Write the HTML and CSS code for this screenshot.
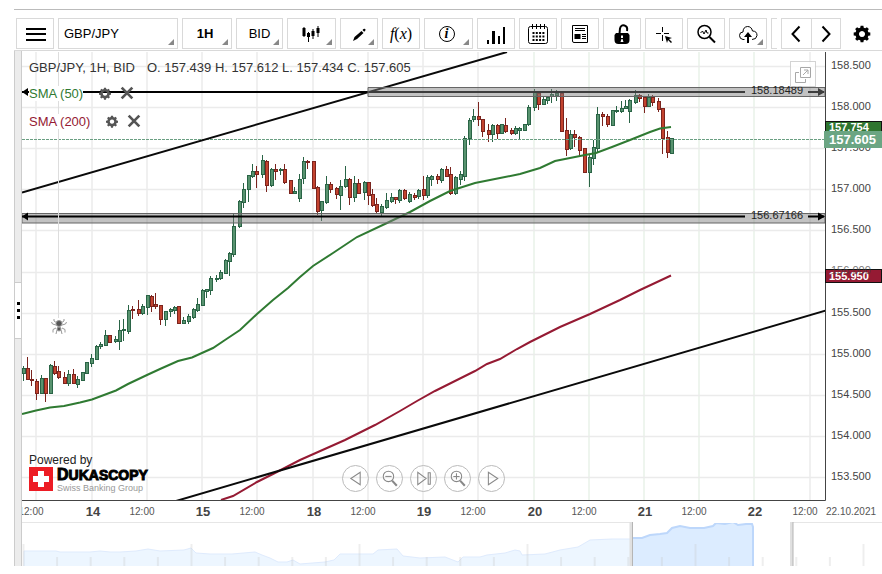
FILE: index.html
```html
<!DOCTYPE html>
<html lang="en">
<head>
<meta charset="utf-8">
<title>GBP/JPY, 1H</title>
<link rel="stylesheet" href="styles.css">
</head>
<body>
<main class="widget">
  <nav class="toolbar" aria-label="Chart tools">
    <button class="tool" aria-label="Menu"><svg viewBox="0 0 24 24"><path class="s2" d="M3 7H23M3 12H23M3 18H23"/></svg></button>
    <button class="tool symbol more">GBP/JPY</button>
    <button class="tool period more">1H</button>
    <button class="tool side more">BID</button>
    <button class="tool wide more" aria-label="Chart type"><svg viewBox="0 0 24 24"><path class="s1" d="M4 5V15M8.500 10V20M13 7V17M18 4V15"/><path d="M2.500 6h3v8h-3zM7 11h3v4H7zM11.500 9h3v5h-3zM16.500 6h3v5h-3z"/></svg></button>
    <button class="tool more" aria-label="Draw"><svg viewBox="0 0 24 24"><path d="M6 19l1.500-4 7-6 2 2-6.500 6zM15.500 8l1-1q1-.7 1.700 0t0 1.700l-1 1z"/></svg></button>
    <button class="tool fx"><i>f</i>(<i>x</i>)</button>
    <button class="tool wide more info" aria-label="Information"><span class="ring">i</span></button>
    <button class="tool" aria-label="Volume"><svg viewBox="0 0 24 24"><path d="M3 18h2v4H3zM8 9h3v13H8zM14 14h2v8h-2zM19 5h2v17h-2z"/></svg></button>
    <button class="tool" aria-label="Calendar"><svg viewBox="0 0 24 24"><rect class="s1" x="2.500" y="4.500" width="19" height="17" rx="2"/><path class="s1" d="M6.500 2v5M10.500 2v5M14.500 2v5M18.500 2v5"/><path class="dots" d="M6.500 11h12M6.500 14.500h12M6.500 18h12"/></svg></button>
    <button class="tool" aria-label="News"><svg viewBox="0 0 24 24"><path class="s1" d="M4.500 3.500H19.500V20.500H6Q4.500 20.500 4.500 19zM7 6.500h10M7 8.500h10M14 12.500h4M14 14.500h4M14 16.500h4"/><path d="M6.500 12h6v5h-6z"/></svg></button>
    <button class="tool" aria-label="Lock"><svg viewBox="0 0 24 24"><path class="s2" d="M9.500 12L10 6.500Q11 2.500 14.500 3.500T17 9"/><path fill-rule="evenodd" d="M6 11H18L19.500 13V18Q19.500 22 15.500 22H8.500Q4.500 22 4.500 18V13zM11 13.500v2.500h2v-2.500zm.5 3.500-1 3h3l-1-3z"/></svg></button>
    <button class="tool" aria-label="Crosshair"><svg viewBox="0 0 24 24"><path class="s1" d="M10.500 5v5M10.500 13v6M4 11.500h5M12 11.500h5"/><path d="M13 14l7 2-3 1 3 3-1 1-3-3-1 3z"/></svg></button>
    <button class="tool" aria-label="Zoom"><svg viewBox="0 0 24 24"><circle class="s15" cx="10.500" cy="10" r="6.500"/><path class="s1" d="M6.500 11l2-2 1.500 3 2-4 1 3h1.500"/><path class="s2" d="M15.500 15l5.500 5.500"/></svg></button>
    <button class="tool more" aria-label="Save"><svg viewBox="0 0 24 24"><path class="s1" d="M8.500 17.500H7Q3.500 17 3.500 13.500T7 10Q7 5 11.500 4.500 15.500 4.500 16.500 9 21 9 21 13.500 20.500 17.500 16 17.500"/><path d="M12 10l4 5h-3v6h-2v-6H8z"/></svg></button>
    <span class="clip"></span>
    <span class="pager">
      <button aria-label="Previous"><svg viewBox="0 0 24 24"><path class="s2" d="M15.500 4.500L8.500 12l7 7.500"/></svg></button>
      <button aria-label="Next"><svg viewBox="0 0 24 24"><path class="s2" d="M8.500 4.500L15.500 12l-7 7.500"/></svg></button>
    </span>
    <button class="settings" aria-label="Settings"><svg viewBox="-1 0 26 26"><use href="#gear"/></svg></button>
  </nav>

  <div class="workspace">
    <aside class="splitter"><button class="grip" aria-label="Resize panel"><i></i><i></i><i></i></button></aside>
    <section class="chart">
      <svg class="plot" viewBox="22 51 860 515" role="img" aria-label="GBP/JPY hourly candles">
        <defs>
          <path id="gear" fill-rule="evenodd" d="M10.500 4h3l.4 2.100 1.600.7 1.800-1.200 2.100 2.100-1.200 1.800.7 1.600 2.100.4v3l-2.100.4-.7 1.600 1.200 1.800-2.100 2.100-1.800-1.200-1.600.7-.4 2.100h-3l-.4-2.100-1.600-.7-1.800 1.200-2.100-2.100 1.200-1.800-.7-1.600L3 14.500v-3l2.100-.4.700-1.600-1.200-1.800 2.100-2.100 1.800 1.200 1.600-.7zM12 9.700a3.300 3.300 0 1 0 .01 0z"/>
          <clipPath id="area"><rect x="22" y="52" width="803" height="448"/></clipPath>
          <clipPath id="times"><rect x="22" y="501" width="860" height="20"/></clipPath>
          <clipPath id="window"><rect x="633" y="523" width="158" height="43"/></clipPath>
        </defs>
        <g id="grid" clip-path="url(#area)"></g>
        <g id="candles" class="candles"></g>
        <g clip-path="url(#area)">
          <path class="dash" d="M22 139.500H825"/>
          <polyline class="sma50" points="22,414 36,410.500 50,407.500 64,406 80,402.500 92,399.500 104,395 116,390.500 128,384 147,375 160,369 178,361 192,357.500 213,348 225,340 240,330 257,314 273,300 288,288 300,277 313,266 333,253 357,237 387,223 410,212 430,201 450,191 475,183 500,178 520,174 540,168 555,161 570,158 585,155 596,153 612,147 630,140 650,132 660,128.500 671,127"/>
          <polyline class="sma200" points="221,500 233,496 257,482 273,474 300,460 318,452 345,440 375,425 400,411 417,401 435,391 455,381 475,371 487,364 500,359 517,349 530,342 560,327 590,314 620,300 640,290 655,283 671,275.500"/>
          <path class="trend" d="M22 192.500L507 52M176 501L826 310.500"/>
          <path class="level" d="M22 92H745M808 92H824"/>
          <path class="head" d="M22 92l6-4v8zM825 92l-7-4v8z"/>
          <path class="zone" d="M368 87.500H825V96.500H368zM22 213.500H825V223H22z"/>
          <path class="level" d="M22 216.500H745M808 216.500H824"/>
          <path class="head" d="M22 216.500l6-4v8zM825 216.500l-7-4v8z"/>
          <path class="cursor" d="M58.500 52V318"/>
        </g>
        <g class="levels"><text x="751" y="94">158.18489</text><text x="751" y="219">156.67166</text></g>
        <path class="axis" d="M22 500.500H825.500V52"/>
        <g id="prices" class="prices"></g>
        <rect class="tag tag-red" x="825.500" y="269.500" width="56" height="13"/><text class="tag-text" x="829" y="280">155.950</text>
        <g class="prices"><text class="through" x="831" y="274">156.000</text></g>
        <rect class="tag tag-green" x="825.500" y="121.500" width="56" height="13"/><text class="tag-text" x="829" y="131">157.754</text>
        <rect class="tag-last" x="824" y="131" width="58" height="17"/><text class="last-text" x="829" y="144">157.605</text>
        <g id="hours" class="hours" clip-path="url(#times)"></g>
        <text class="date" x="826" y="515">22.10.2021</text>
        <path class="rule" d="M22 522.500H633M791 522.500H882"/>
        <path class="nav-area" d="M24 567V551H56L60 552H90L100 551 110 552H120L136 551 148 549 160 551 184 550 191 548 196 553 210 554 232 554 255 552 262 555 270 558 278 562 287 562 293 560 300 564 325 562 334 560 340 554 373 554 378 550 397 549 403 556 420 558 445 557 458 562 463 557 480 557 487 555 505 553 515 550 520 551 522 555 545 554 560 550 578 547 590 540 612 539 633 539V567z"/>
        <g clip-path="url(#window)"><path class="nav-live" d="M631 538L642 538 650 535 660 534 667 533 672 528 680 526 690 528 704 528 713 526 716 523 725 524 733 522 738 525 746 524 752 524 753 527V567H631z"/></g>
        <path class="nav-ticks" id="ticks"/>
        <path class="handle" d="M631 522v44M791.500 522v44"/><path class="handle-edge" d="M632.500 522v44M793 522v44"/>
        <g class="spider" aria-label="Marker"><path d="M57 323l-3-2v-2M56 325l-3.500-1-1-2M56 328l-3 1.500v3M57 330l-1 4M61 323l3-2v-2M62 325l3.500-1 1-2M62 328l3 1.500v3M61 330l1 4"/><ellipse cx="59" cy="323.500" rx="3" ry="3"/><circle cx="59" cy="329" r="2"/></g>
      </svg>

      <div class="legend">
        <p class="quote"><span>GBP/JPY, 1H, BID</span><span>O. 157.439 H. 157.612 L. 157.434 C. 157.605</span></p>
        <p class="study green"><span>SMA (50)</span><button aria-label="SMA 50 settings"><svg viewBox="0 0 24 24"><use href="#gear"/></svg></button><button aria-label="Remove SMA 50"><svg viewBox="0 0 24 24"><path class="cross" d="M4 4l16 16M20 4L4 20"/></svg></button></p>
        <p class="study red"><span>SMA (200)</span><button aria-label="SMA 200 settings"><svg viewBox="0 0 24 24"><use href="#gear"/></svg></button><button aria-label="Remove SMA 200"><svg viewBox="0 0 24 24"><path class="cross" d="M4 4l16 16M20 4L4 20"/></svg></button></p>
      </div>
      <button class="popout" aria-label="Open in new window"><svg viewBox="0 0 24 24"><path d="M9.500 5.500h10v10h-10zM8 10.500H4.500v10h10V17M12 13l5-5M13 8h4v4"/></svg></button>
      <a class="brand" href="#"><span>Powered by</span>
        <span class="logo"><svg viewBox="0 0 24 24"><path fill="#ed1c24" d="M0 0h24v24H0z"/><path fill="#fff" d="M9 4h6v5h5v6h-5v5H9v-5H4V9h5z"/></svg><span class="words"><b><big>D</big>UKASCOPY</b><small>Swiss Banking Group</small></span></span></a>
      <div class="controls">
        <button aria-label="Back"><svg viewBox="0 0 24 24"><path d="M16.500 6v12L7.500 12z"/></svg></button>
        <button aria-label="Zoom out"><svg viewBox="0 0 24 24"><circle cx="11" cy="10" r="5"/><path d="M8 10h6"/><path class="stem" d="M14.500 14l4.500 5"/></svg></button>
        <button aria-label="Latest"><svg viewBox="0 0 24 24"><path d="M6.500 6v12l8-6zM16.500 6.500h2v11h-2z"/></svg></button>
        <button aria-label="Zoom in"><svg viewBox="0 0 24 24"><circle cx="11" cy="10" r="5"/><path d="M8 10h6M11 7v6"/><path class="stem" d="M14.500 14l4.500 5"/></svg></button>
        <button aria-label="Forward"><svg viewBox="0 0 24 24"><path d="M9 6v12l9-6z"/></svg></button>
      </div>
    </section>
  </div>
</main>
<script src="chart.js"></script>
</body>
</html>
```
FILE: styles.css
```css
* { box-sizing: border-box; }
body { margin: 0; background: #fff; font-family: "Liberation Sans", Arial, sans-serif; color: #333; font-size: 13px; }
button { margin: 0; padding: 0; border: 0; background: none; font: inherit; color: #000; }
p { margin: 0; }
.widget { margin: 9px 0 0 14px; border-top: 1px solid #bbb; }

.toolbar { display: flex; gap: 4px; padding: 8px 3px 1px 2px; }
.tool, .pager { border: 1px solid #d9d9d9; height: 31px; background: #fff; }
.tool { position: relative; flex: 0 0 38px; display: flex; align-items: center; justify-content: center; }
.toolbar svg { width: 24px; height: 24px; fill: #000; }
.toolbar .s1, .toolbar .s15, .toolbar .s2, .toolbar .dots { fill: none; stroke: #000; }
.toolbar .s15 { stroke-width: 1.5; }
.toolbar .s2 { stroke-width: 2; }
.toolbar .dots { stroke-width: 2; stroke-dasharray: 2 1.3; }
.more::after { content: ""; position: absolute; right: 3px; bottom: 3px; border: 3px solid; border-color: transparent #888 #888 transparent; }
.symbol { flex: 1 1 120px; justify-content: flex-start; padding-left: 5px; }
.period { flex-basis: 50px; font-weight: bold; padding-right: 4px; }
.side { flex-basis: 47px; }
.wide { flex-basis: 49px; }
.fx { font: 16px "Liberation Serif", serif; }
.info { padding-right: 4px; }
.ring { width: 16px; height: 16px; border: 1px solid #000; border-radius: 50%; font: italic bold 14px/13px "Liberation Serif", serif; }
.clip { flex: 0 0 6px; height: 31px; border: 1px solid #d9d9d9; border-right: 0; }
.pager { display: flex; flex: 0 0 60px; }
.pager button { flex: 1; }
.pager button + button { border-left: 1px solid #d9d9d9; }
.pager button, .settings { display: flex; align-items: center; justify-content: center; }
.settings { flex: 0 0 34px; }

.workspace { display: flex; border-top: 1px solid #d9d9d9; }
.splitter { flex: 0 0 8px; display: flex; align-items: center; padding-top: 4px; background: #ececec; border: solid #ccc; border-width: 0 1px; }
.grip { width: 6px; height: 57px; background: #fff; border: solid #ccc; border-width: 1px 0; display: flex; flex-direction: column; align-items: center; justify-content: center; gap: 4px; }
.grip i { width: 3px; height: 3px; background: #000; }
.chart { position: relative; flex: 1; min-width: 0; }
.plot { display: block; width: 100%; height: auto; }

.grid { stroke: #ebebeb; stroke-width: 1.5; fill: none; }
.grid-new { stroke: #e9f2e9; }
.candles .wick { stroke-width: 1; fill: none; }
.up { stroke: #2a6446; fill: #58936f; }
.down { stroke: #7b241e; fill: #c3432f; }
.dash { stroke: #6a9f82; stroke-dasharray: 3 1; }
.sma50, .sma200, .trend { fill: none; stroke-width: 2; }
.sma50 { stroke: #2f7a32; }
.sma200 { stroke: #951a33; }
.trend { stroke: #0a0a0a; }
.level { stroke: #000; stroke-width: 2; }
.zone { fill: #808080; fill-opacity: .48; stroke: #666; }
.cursor { stroke: #ddd; }
.axis { fill: none; stroke: #444; }
.levels { font-size: 11px; fill: #222; }
.prices { font-size: 11px; fill: #444; }
.through { opacity: .7; }
.tag { stroke: #111; }
.tag-green { fill: #2f7530; }
.tag-red { fill: #951a33; }
.tag-last { fill: #6ba583; }
.tag-text, .last-text { font-weight: bold; font-size: 11px; fill: #fff; }
.last-text { font-size: 13px; }
.hours { font-size: 10px; fill: #555; text-anchor: middle; }
.hours .day { font-size: 13px; font-weight: bold; fill: #444; }
.date { font-size: 10px; fill: #555; }
.rule { stroke: #e6e6e6; }
.nav-area { fill: #edf6ff; stroke: #dfebfd; }
.nav-live { fill: #dcecff; stroke: #bdd7fb; stroke-width: 2; }
.nav-ticks { stroke: #c8c8c8; stroke-opacity: .3; stroke-width: 2; }
.handle { stroke: #e0e0e0; stroke-width: 3; }
.handle-edge { stroke: #b5b5b5; }
.spider { fill: #555; stroke: #999; stroke-width: 1; }
.spider path { fill: none; }

.legend { position: absolute; top: 9px; left: 7px; }
.quote { display: flex; gap: 12px; line-height: 16px; padding-bottom: 8px; white-space: nowrap; }
.study { display: flex; align-items: center; height: 18px; margin-bottom: 10px; }
.study span { margin-right: 14px; background: #fff; }
.study button { width: 16px; height: 16px; margin-right: 6px; }
.study svg { display: block; fill: #555; }
.cross { fill: none; stroke: #555; stroke-width: 4; }
.green { color: #2f7a32; }
.red { color: #951a33; }
.popout { position: absolute; right: 66px; top: 10px; width: 26px; height: 26px; border: 1px solid #ccc; background: #fff; opacity: .85; }
.popout svg { display: block; fill: none; stroke: #999; }
.brand { position: absolute; left: 7px; bottom: 72px; color: #222; text-decoration: none; font-size: 12px; line-height: 14px; }
.brand > span { display: block; }
.brand > .logo { display: flex; gap: 4px; }
.logo svg { width: 24px; height: 24px; }
.words { display: flex; flex-direction: column; }
.words b { font-size: 14px; line-height: 15px; color: #000; -webkit-text-stroke: 1px #000; }
.words big { font-size: 16px; }
.words small { font-size: 9px; line-height: 11px; color: #999; }
.controls { position: absolute; left: 320px; bottom: 74px; display: flex; gap: 7px; }
.controls button { width: 27px; height: 27px; border: 1px solid #bbb; border-radius: 50%; }
.controls svg { display: block; width: 25px; height: 25px; fill: none; stroke: #888; }
.controls .stem { stroke-width: 2; }
```
FILE: chart.js
```js
const NS = "http://www.w3.org/2000/svg";
function add(parent, tag, attrs, text) {
  const el = document.createElementNS(NS, tag);
  for (const k in attrs) el.setAttribute(k, attrs[k]);
  if (text) el.textContent = text;
  document.getElementById(parent).appendChild(el);
}

const days = [36, 92, 147, 202, 257, 313, 368, 423, 478, 534, 589, 644, 699, 754, 810];
const labels = ["12:00", "14", "12:00", "15", "12:00", "18", "12:00", "19", "12:00", "20", "12:00", "21", "12:00", "22", "12:00"];
days.forEach((x, i) => {
  add("grid", "path", { class: x > 500 && x < 800 ? "grid grid-new" : "grid", d: `M${x} 52V500` });
  const day = labels[i].length === 2;
  add("hours", "text", { x: day ? x + 1 : x - 5, y: day ? 516 : 515, class: day ? "day" : "" }, labels[i]);
});
for (let i = 0; i < 11; i++) {
  const y = Math.round(66 + i * 41.1);
  add("grid", "path", { class: "grid", d: `M22 ${y + 0.5}H825` });
  if (i !== 5) add("prices", "text", { x: 831, y: y + 3 }, (158.5 - i * 0.5).toFixed(3));
}

// x, high, low, body top, body bottom, direction
const data = `23 366 381 368 374 u;27 357 380 368 380 d;31.5 370 386 379 381 d;36 379 400 381 394 d;41.5 375 394 378 394 u;45.5 378 402 378 394 d;50 364 394 365 394 u;54.5 361 375 366 374 d;58.7 366 379 371 378 d;64.5 372 384 377 384 d;68.7 370 386 374 384 u;73 369 384 374 384 d;77.5 376 388 379 385 u;82 372 381 372 381 u;86.5 362 374 362 374 u;91.7 354 367 358 364 u;96 345 360 346 360 u;100.5 342 349 344 347 u;105 330 346 335 346 u;109.5 335 343 335 343 d;115 336 343 339 342 u;119.5 320 350 330 342 u;123.5 319 341 329 331 u;128 305 334 310 332 u;132.5 306 319 309 311 d;138 300 316 309 314 d;142.5 304 315 306 314 u;147 295 315 295 308 u;151.5 295 312 296 307 d;155.5 293 309 304 307 d;160 305 325 305 320 d;165.5 311 326 311 320 u;170 308 317 309 312 u;174.5 306 314 307 311 u;178.7 306 324 306 324 d;183.5 317 324 320 324 u;188.5 314 324 316 322 u;193 308 319 309 318 u;197.5 298 312 304 311 u;202 289 306 290 306 u;206.5 289 298 289 292 u;210.5 276 295 278 291 u;216 275 282 278 280 u;220.5 270 280 272 279 u;225 259 274 260 274 u;229.5 252 276 253 262 u;233.7 214 257 226 255 u;239.5 200 228 201 227 u;243.5 183 208 189 203 u;248 175 202 175 190 u;252.5 164 178 171 177 u;256.7 166 188 171 175 d;262.5 155 178 160 175 u;266.7 160 192 161 186 d;271.5 168 187 169 186 u;275.5 164 180 169 172 d;280 168 175 169 171 u;284.7 164 184 169 183 d;290 180 194 180 194 d;294.5 187 194 191 194 u;299 174 202 179 199 u;303.5 157 184 161 179 u;307.5 160 169 161 163 d;313 161 189 161 189 d;317.5 186 215 187 212 d;321.7 201 221 201 211 u;326.5 176 204 184 203 u;330.7 182 193 184 190 d;336.5 187 199 188 195 d;340.5 180 210 186 196 u;345 166 188 179 187 u;349.5 178 205 179 198 d;354 176 202 183 198 u;358.5 179 194 183 194 d;364 181 200 182 193 u;368 182 205 182 196 d;372.5 189 207 194 206 d;376.7 198 214 204 212 d;381.5 204 216 206 213 u;386.7 193 209 200 208 u;391 193 203 197 202 u;395.5 197 204 197 200 d;399.7 189 203 190 201 u;404.5 189 200 190 199 d;409.7 192 203 194 202 u;414 193 200 195 198 d;418.5 189 199 190 197 u;423 176 200 189 196 d;427.5 175 198 177 196 u;431.5 175 186 176 180 u;437.5 174 184 176 180 d;441.5 168 183 169 181 u;446 166 177 169 177 d;450.5 167 195 174 194 d;455 176 195 177 194 u;460.5 171 185 174 180 u;464.7 136 181 138 177 u;469.5 118 145 120 139 u;473.7 109 122 116 120 u;478 102 126 116 120 d;482.5 119 137 119 132 d;488 124 142 130 135 d;492.5 124 142 125 135 u;497 124 139 125 134 d;501 124 134 124 134 u;505.5 118 133 125 132 d;511 128 135 130 134 d;515.5 126 135 128 134 u;519.5 127 140 128 131 u;524.5 124 131 124 131 u;528.5 105 126 107 125 u;534.5 89 111 92 108 u;538.5 92 110 93 105 d;543 97 105 99 105 u;547.5 96 104 97 101 u;551.7 89 103 94 97 u;556 90 101 93 96 u;561.5 93 132 93 132 d;566 118 156 130 150 d;570.5 130 150 134 149 u;574.7 130 147 134 138 d;579 136 157 137 151 d;584.5 148 173 148 173 d;589 155 187 157 173 u;593.5 140 165 147 159 u;597.7 107 152 114 149 u;602.5 112 126 114 117 d;607.5 114 127 116 125 d;612.5 110 126 110 126 u;616.5 106 113 110 112 u;621 101 113 108 112 u;625.5 100 109 106 109 u;629.7 99 123 100 112 u;635.5 90 104 95 103 u;639.5 94 102 95 99 d;644 96 113 97 107 d;648.5 94 107 97 107 u;652.7 95 106 97 103 d;658.5 98 112 101 110 d;662.7 108 154 108 139 d;667 131 158 137 153 d;671.5 138 154 138 154 u`;
data.split(";").forEach(row => {
  const [x, hi, lo, top, bottom, dir] = row.split(" ");
  const cls = dir === "u" ? "up" : "down";
  const center = Math.floor(x) + 0.5;
  add("candles", "path", { class: "wick " + cls, d: `M${center} ${hi}V${lo}` });
  add("candles", "rect", { class: cls, x: center - 1, y: +top + 0.5, width: 3, height: Math.max(1, bottom - top - 1) });
});

let ticks = "";
for (let i = 0; i < 26; i++) ticks += `M${(23.5 + i * 33.6).toFixed(1)} ${i % 5 ? 557 : 544}V566`;
document.getElementById("ticks").setAttribute("d", ticks);
```
